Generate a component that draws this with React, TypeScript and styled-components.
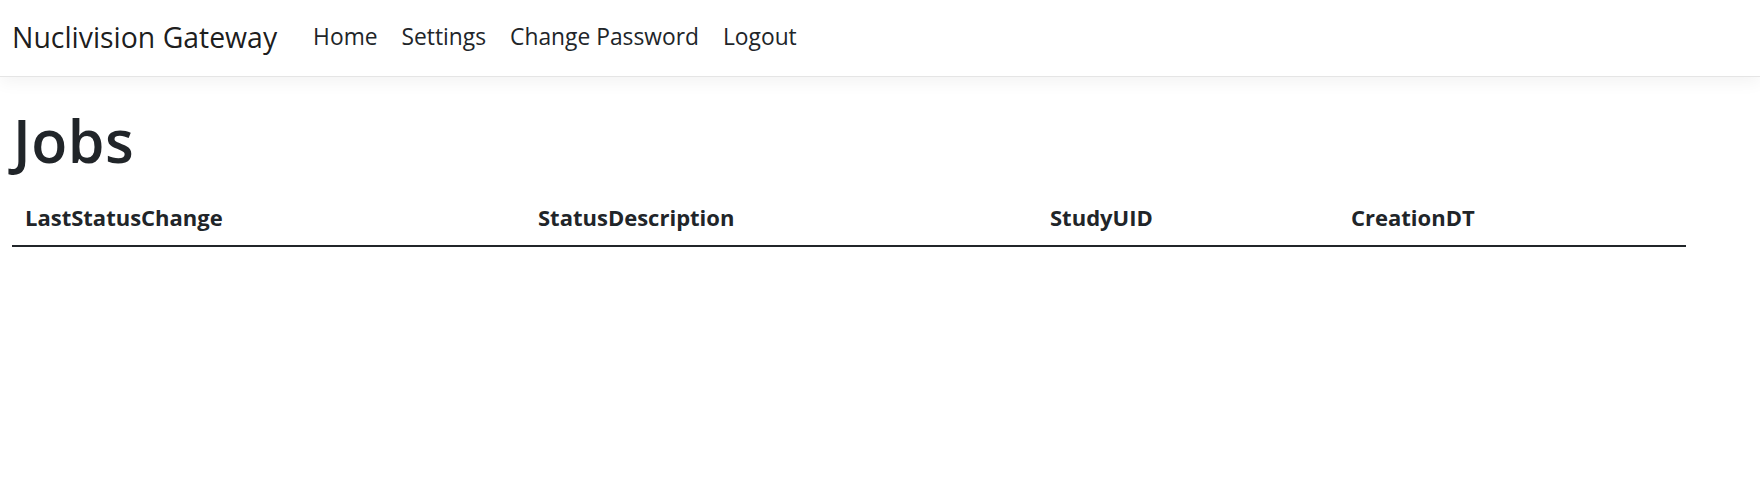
import React from "react";
import styled, { createGlobalStyle } from "styled-components";

const GlobalStyle = createGlobalStyle`
  html, body { margin: 0; padding: 0; background: #fff; }
  body {
    font-family: "Open Sans", "Noto Sans", sans-serif;
    color: #212529;
  }
  * { box-sizing: border-box; }
`;

const NavBar = styled.header`
  height: 77px;
  background: #fff;
  border-bottom: 1px solid #e5e5e5;
  box-shadow: 0 5px 16px rgba(0, 0, 0, 0.05);
  display: flex;
  align-items: center;
  padding: 0 12px;
`;

const Brand = styled.a`
  font-size: 28.4px;
  color: rgba(0, 0, 0, 0.9);
  text-decoration: none;
  margin-right: 24px;
  line-height: 1;
  padding-bottom: 2px;
`;

const NavList = styled.nav`
  display: flex;
  align-items: center;
`;

const NavLink = styled.a`
  font-size: 22.8px;
  color: #212529;
  text-decoration: none;
  padding: 0 12px 2px 12px;
  line-height: 1;
`;

const Main = styled.main`
  padding: 22px 12px 0 12px;
`;

const Title = styled.h1`
  font-size: 59px;
  font-weight: 600;
  letter-spacing: 0.5px;
  line-height: 66px;
  margin: 8px 0 17px 1px;
  color: #212529;
`;

const Table = styled.div`
  width: 1674px;
`;

const HeadRow = styled.div`
  display: grid;
  grid-template-columns: 513px 512px 301px 348px;
  border-bottom: 2px solid #212529;
`;

const HeadCell = styled.div`
  padding: 11px 11px 11px 13px;
  font-size: 22px;
  font-weight: 700;
  line-height: 33px;
`;

const columns = ["LastStatusChange", "StatusDescription", "StudyUID", "CreationDT"];
const links = ["Home", "Settings", "Change Password", "Logout"];

export default function App() {
  return (
    <>
      <GlobalStyle />
      <NavBar>
        <Brand href="#">Nuclivision Gateway</Brand>
        <NavList>
          {links.map((l) => (
            <NavLink key={l} href="#">{l}</NavLink>
          ))}
        </NavList>
      </NavBar>
      <Main>
        <Title>Jobs</Title>
        <Table>
          <HeadRow>
            {columns.map((c) => (
              <HeadCell key={c}>{c}</HeadCell>
            ))}
          </HeadRow>
        </Table>
      </Main>
    </>
  );
}
